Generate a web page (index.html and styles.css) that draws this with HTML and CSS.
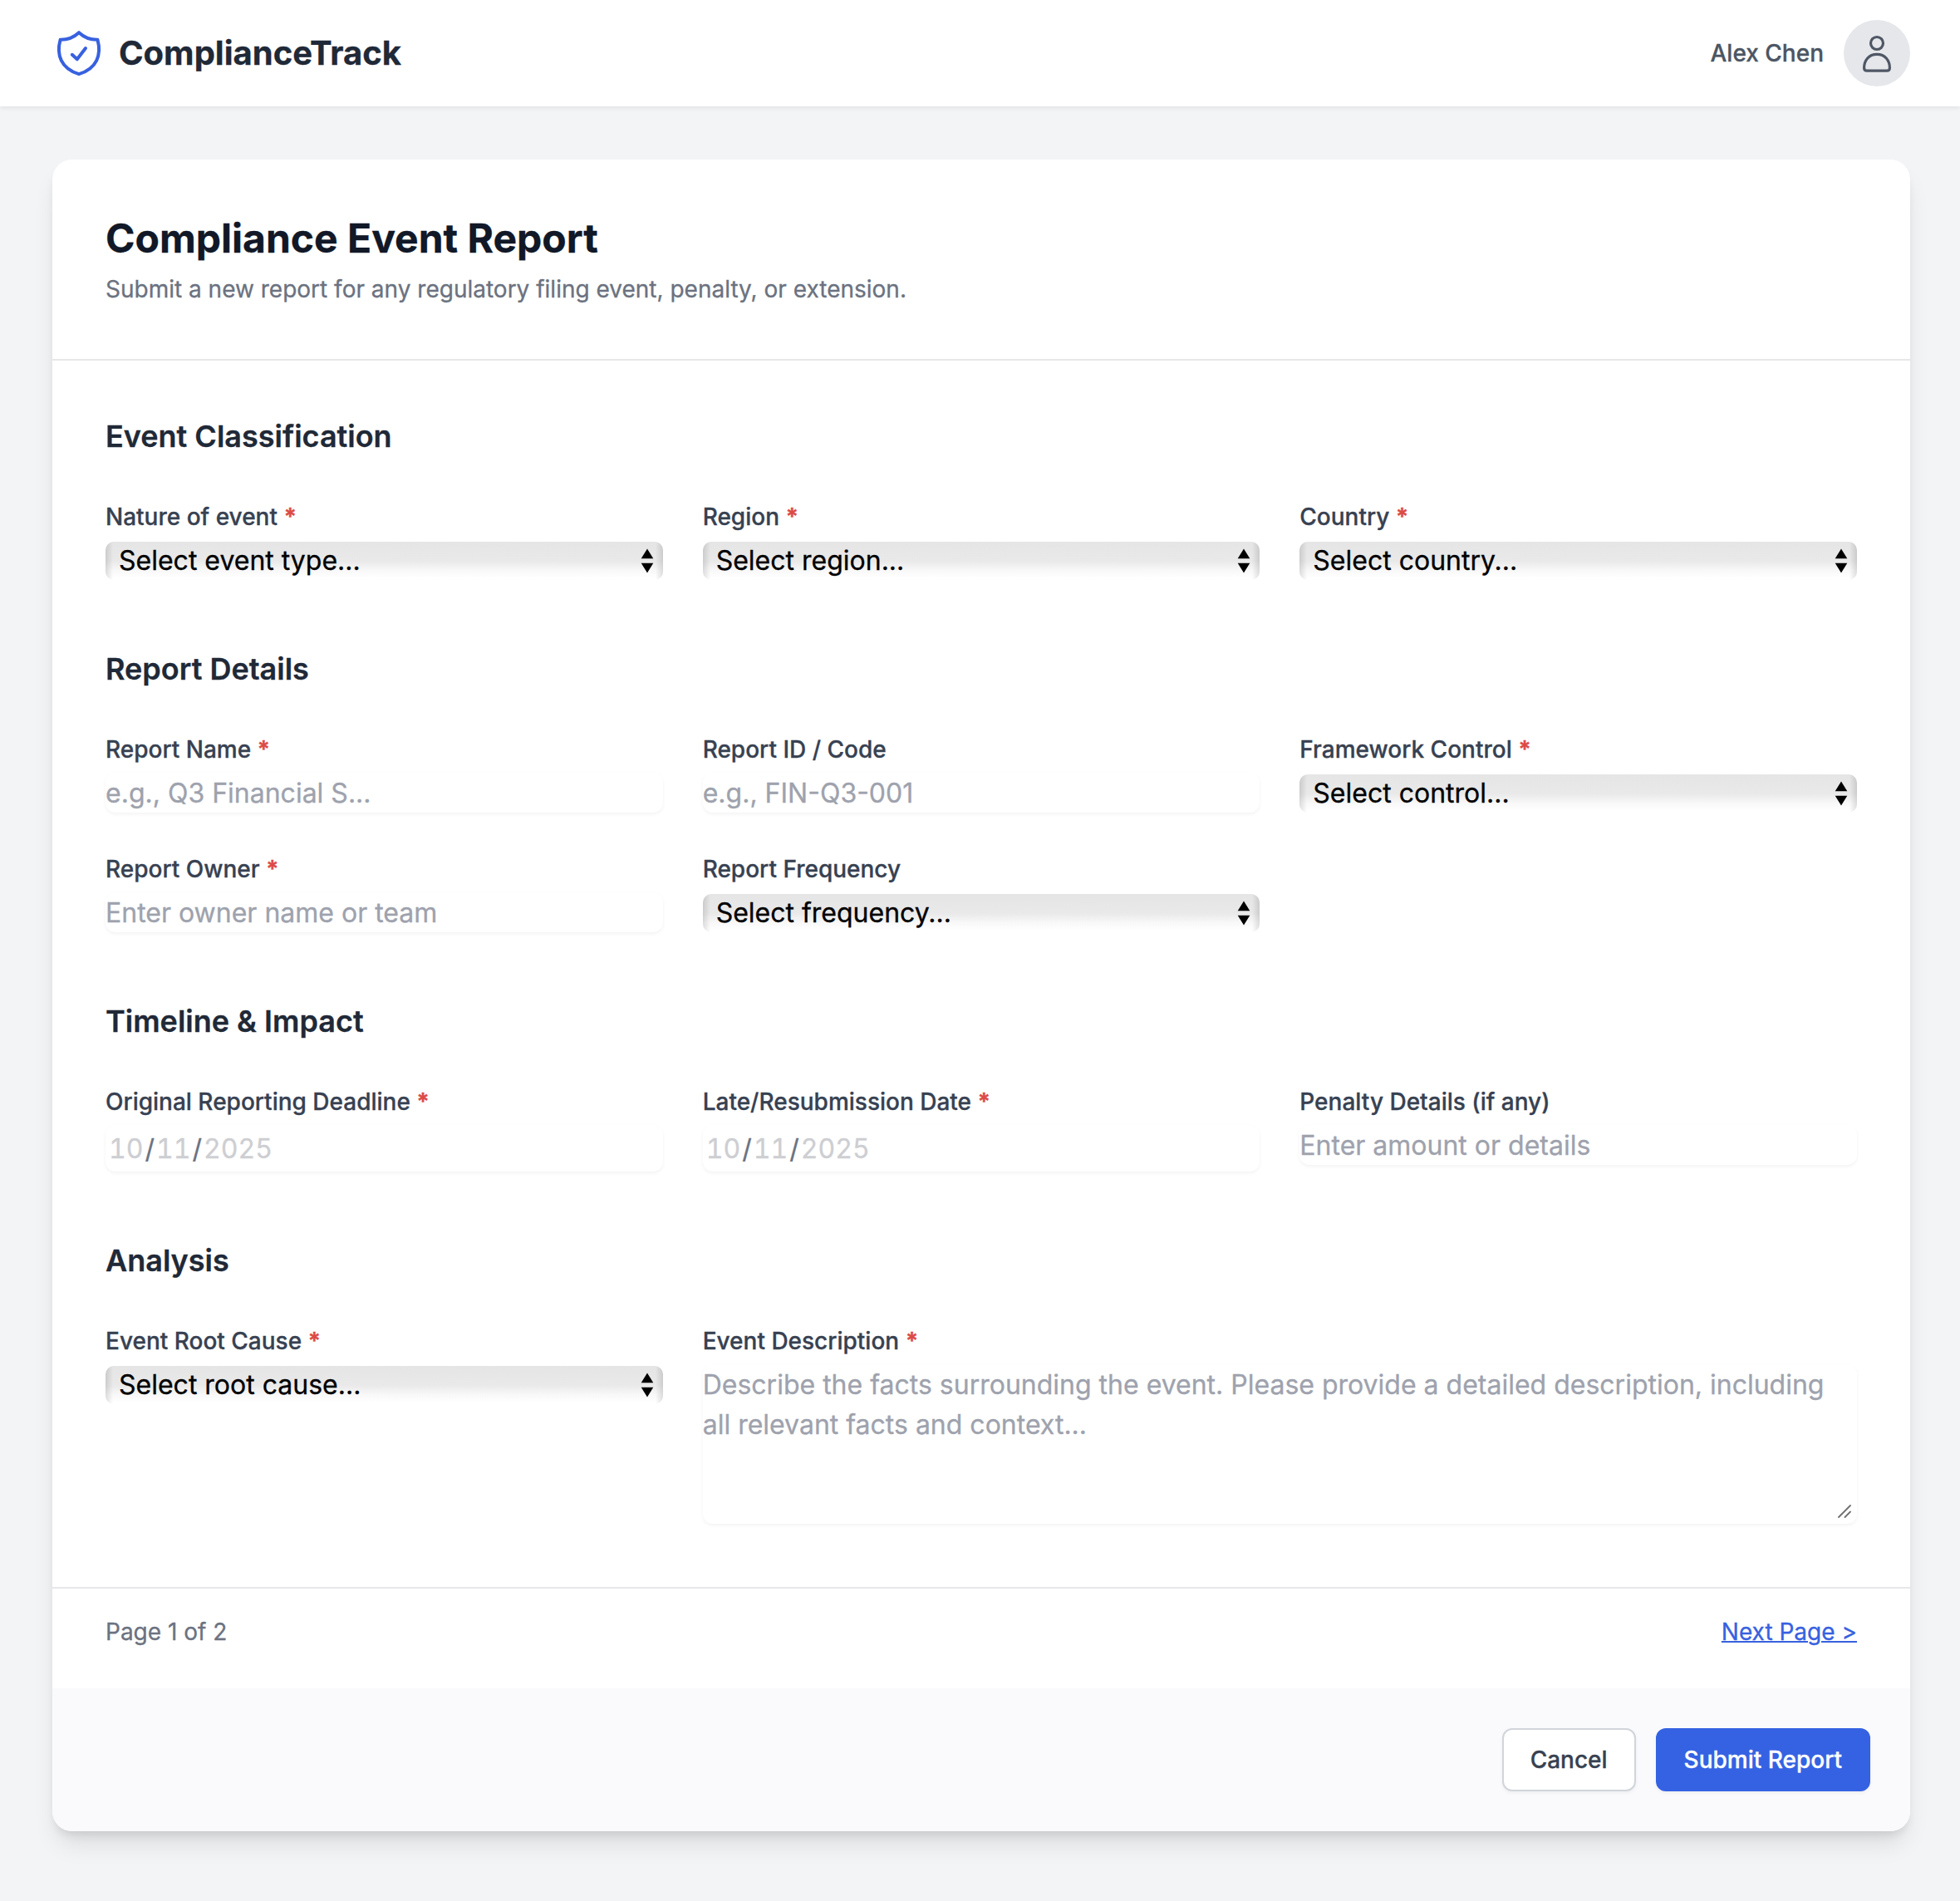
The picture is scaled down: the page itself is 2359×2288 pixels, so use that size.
FILE: index.html
```html
<!DOCTYPE html>
<html lang="en">
<head>
<meta charset="utf-8">
<title>ComplianceTrack</title>
<link rel="stylesheet" href="styles.css">
</head>
<body>
<svg class="sprite" aria-hidden="true">
  <symbol id="updown" viewBox="0 0 16 30"><path d="M8 0.5 15.3 12.3H0.7zM8 29.5 15.3 17.7H0.7z" fill="#000"/></symbol>
</svg>
<header class="topbar">
  <div class="brand">
    <svg class="brand-icon" viewBox="0 0 64 64" fill="none" stroke="#3761df" stroke-width="4" stroke-linecap="round" stroke-linejoin="round"><path d="M32 7.2C25.5 13.2 18 16 9.6 15.8C4.5 34 10.5 50.5 32 57.2C53.5 50.5 59.5 34 54.4 15.8C46 16 38.5 13.2 32 7.2Z"/><path d="M23.8 33.8 29.8 39.3 40 26"/></svg>
    <span class="brand-name">ComplianceTrack</span>
  </div>
  <div class="user">
    <span class="user-name">Alex Chen</span>
    <span class="avatar"><svg viewBox="0 0 80 80" fill="none" stroke="#4f5765" stroke-width="3.2"><circle cx="40" cy="28" r="7.5"/><path d="M40 41.4C30 41.4 24.6 49 24.6 57.7Q24.6 61.2 28 61.2H52Q55.4 61.2 55.4 57.7C55.4 49 50 41.4 40 41.4Z"/></svg></span>
  </div>
</header>
<main class="page">
  <form class="card">
    <div class="card-head">
      <h1>Compliance Event Report</h1>
      <p>Submit a new report for any regulatory filing event, penalty, or extension.</p>
    </div>
    <div class="card-body">
      <section>
        <h2>Event Classification</h2>
        <div class="grid">
          <div class="field"><label>Nature of event <b>*</b></label><div class="select"><select><option>Select event type...</option></select><svg><use href="#updown"/></svg></div></div>
          <div class="field"><label>Region <b>*</b></label><div class="select"><select><option>Select region...</option></select><svg><use href="#updown"/></svg></div></div>
          <div class="field"><label>Country <b>*</b></label><div class="select"><select><option>Select country...</option></select><svg><use href="#updown"/></svg></div></div>
        </div>
      </section>
      <section>
        <h2>Report Details</h2>
        <div class="grid">
          <div class="field"><label>Report Name <b>*</b></label><input class="input" placeholder="e.g., Q3 Financial S..."></div>
          <div class="field"><label>Report ID / Code</label><input class="input" placeholder="e.g., FIN-Q3-001"></div>
          <div class="field"><label>Framework Control <b>*</b></label><div class="select"><select><option>Select control...</option></select><svg><use href="#updown"/></svg></div></div>
          <div class="field"><label>Report Owner <b>*</b></label><input class="input" placeholder="Enter owner name or team"></div>
          <div class="field"><label>Report Frequency</label><div class="select"><select><option>Select frequency...</option></select><svg><use href="#updown"/></svg></div></div>
        </div>
      </section>
      <section>
        <h2>Timeline &amp; Impact</h2>
        <div class="grid">
          <div class="field"><label>Original Reporting Deadline <b>*</b></label><div class="input date"><span>10</span><i>/</i><span>11</span><i>/</i><span>2025</span></div></div>
          <div class="field"><label>Late/Resubmission Date <b>*</b></label><div class="input date"><span>10</span><i>/</i><span>11</span><i>/</i><span>2025</span></div></div>
          <div class="field"><label>Penalty Details (if any)</label><input class="input" placeholder="Enter amount or details"></div>
        </div>
      </section>
      <section>
        <h2>Analysis</h2>
        <div class="grid">
          <div class="field"><label>Event Root Cause <b>*</b></label><div class="select"><select><option>Select root cause...</option></select><svg><use href="#updown"/></svg></div></div>
          <div class="field wide"><label>Event Description <b>*</b></label><div class="area"><textarea class="input" placeholder="Describe the facts surrounding the event. Please provide a detailed description, including all relevant facts and context..."></textarea><svg class="grip" viewBox="0 0 16 16" stroke="#707070" stroke-width="1.8" stroke-linecap="round"><path d="M1 15 15 1M8.5 15 15 8.5"/></svg></div></div>
        </div>
      </section>
    </div>
    <div class="pager"><span>Page 1 of 2</span><a href="#">Next Page &gt;</a></div>
    <div class="actions"><button type="button" class="btn">Cancel</button><button type="button" class="btn primary">Submit Report</button></div>
  </form>
</main>
</body>
</html>
```
FILE: styles.css
```css
* { box-sizing: border-box; margin: 0; }
body {
  min-height: 2288px;
  background: #f3f4f6;
  font-family: Inter, "Liberation Sans", sans-serif;
  font-size: 32px;
  line-height: 48px;
  color: #1f2937;
  -webkit-text-stroke: .3px;
}
.sprite { display: none; }

.topbar {
  height: 128px;
  padding: 0 60px 0 63px;
  display: flex;
  align-items: center;
  justify-content: space-between;
  background: #fff;
  box-shadow: 0 2px 6px rgba(0, 0, 0, .08);
}
.brand { display: flex; align-items: center; gap: 16px; }
.brand-icon { width: 64px; height: 64px; }
.brand-name { font-size: 40px; font-weight: 700; line-height: 56px; }
.user { display: flex; align-items: center; gap: 24px; }
.user-name { font-size: 28px; font-weight: 500; color: #4b5563; }
.avatar {
  width: 80px;
  height: 80px;
  border-radius: 50%;
  background: #e5e7eb;
  overflow: hidden;
}
.avatar svg { display: block; width: 80px; height: 80px; }

.page { padding: 64px 60px 84px 63px; }
.card {
  background: #fff;
  border-radius: 24px;
  overflow: hidden;
  box-shadow: 0 20px 30px -6px rgba(0, 0, 0, .1), 0 8px 12px -4px rgba(0, 0, 0, .1);
}
.card-head { padding: 63px 64px 64px; border-bottom: 2px solid #e6e7e9; }
h1 { font-size: 48px; line-height: 64px; font-weight: 700; color: #111827; }
.card-head p { margin-top: 9px; font-size: 28px; line-height: 40px; color: #6b7280; }

.card-body {
  padding: 63px 64px 76px;
  display: flex;
  flex-direction: column;
  gap: 79px;
}
h2 { font-size: 36px; line-height: 56px; font-weight: 600; margin-bottom: 49px; }
.grid { display: grid; grid-template-columns: repeat(3, 1fr); gap: 48px; align-items: start; }
.wide { grid-column: span 2; }
.field { display: flex; flex-direction: column; gap: 8px; }
label { font-size: 28px; line-height: 40px; font-weight: 500; color: #374151; }
label b { font-weight: 700; color: #dc4b46; }

.input {
  display: block;
  width: 100%;
  height: 48px;
  padding: 2px 0 0;
  border: 0;
  border-radius: 12px;
  background: #fff;
  font: inherit;
  color: #6b7280;
  resize: none;
  overflow: hidden;
  box-shadow: 0 2px 4px rgba(0, 0, 0, .05);
}
.input::placeholder { color: #9ea2ad; opacity: 1; }
.area { position: relative; }
textarea.input { height: 192px; padding-top: 1px; }
.grip { position: absolute; right: 7px; bottom: 7px; width: 16px; height: 16px; }
.date { height: 56px; padding: 5px 2px; display: flex; }
.date span { padding: 0 2px; color: #cdced2; font-variant-numeric: tabular-nums; }
.date i { font-style: normal; }

.select { position: relative; margin-top: 2px; height: 46px; }
.select select {
  display: block;
  appearance: none;
  width: 100%;
  height: 46px;
  padding: 0 16px;
  border: 0;
  border-radius: 10px;
  font: inherit;
  line-height: 46px;
  color: #000;
  background:
    linear-gradient(90deg, rgba(0, 0, 0, .12), transparent 9px, transparent calc(100% - 9px), rgba(0, 0, 0, .12)),
    linear-gradient(#e5e5e5, #e9e9e9 50%, #f8f8f8 75%, #fff 95%);
}
.select svg { position: absolute; right: 11px; top: 8px; width: 16px; height: 30px; }

.pager {
  padding: 32px 64px 48px;
  border-top: 2px solid #e6e7e9;
  display: flex;
  justify-content: space-between;
  font-size: 28px;
  line-height: 40px;
  color: #6b7280;
}
.pager a { color: #3761df; text-decoration-thickness: 2px; }
.actions { padding: 48px; display: flex; justify-content: flex-end; gap: 24px; background: #fafafc; }
.btn {
  height: 76px;
  padding: 0 32px;
  border: 2px solid #d1d5db;
  border-radius: 12px;
  background: #fff;
  font: 500 28px/40px Inter, "Liberation Sans", sans-serif;
  color: #374151;
  box-shadow: 0 2px 4px rgba(0, 0, 0, .05);
}
.primary { background: #3562e3; border-color: #3562e3; color: #fff; }
```
